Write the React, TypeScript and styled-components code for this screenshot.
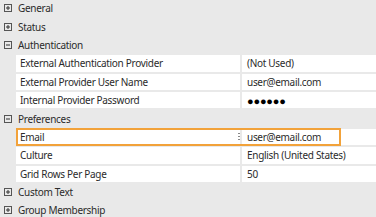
import React from "react";
import styled, { createGlobalStyle } from "styled-components";

const Global = createGlobalStyle`
  html, body { margin: 0; padding: 0; background: #e9e9e9; }
  body { font-family: "Noto Sans", "Open Sans", sans-serif; font-size: 10px; letter-spacing: -0.3px; color: #2b2b2b; overflow: hidden; }
`;

const Grid = styled.div`
  display: flex;
  flex-direction: column;
  width: 376px;
  margin-top: -1px;
`;

const GroupRow = styled.div`
  display: flex;
  align-items: center;
  height: 18.4px;
  padding-left: 4px;
  gap: 6px;
`;

const Toggle = styled.svg`
  width: 8px;
  height: 8px;
  flex: none;
`;

const Caption = styled.span`
  line-height: 1;
`;

const DataRow = styled.div`
  display: flex;
  height: 18.4px;
  padding: 1px 0 1px 16px;
  box-sizing: border-box;
  gap: 2px;
  position: relative;
`;

const Cell = styled.div<{ $w?: number }>`
  background: #fff;
  display: flex;
  align-items: center;
  padding-left: ${(p) => (p.$w ? 4 : 5)}px;
  box-sizing: border-box;
  ${(p) => (p.$w ? `width: ${p.$w}px; flex: none;` : "flex: 1;")}
  white-space: nowrap;
`;

const Dots = styled.div`
  position: absolute;
  left: 238px;
  top: 4px;
  width: 2px;
  height: 10px;
  background: radial-gradient(circle, #888 0.8px, transparent 1px) 0 0 / 2px 3px repeat-y;
`;

const Focus = styled.div`
  position: absolute;
  left: 16px;
  top: 0;
  width: 325px;
  height: 100%;
  border: 2px solid #f2a23a;
  box-sizing: border-box;
  pointer-events: none;
`;

const Password = styled.span`
  font-size: 11px;
  letter-spacing: -0.2px;
  color: #000;
`;

const Icon = ({ open }: { open: boolean }) => (
  <Toggle viewBox="0 0 8 8">
    <rect x="0.5" y="0.5" width="7" height="7" fill="none" stroke="#555" strokeWidth="1" />
    <line x1="2" y1="4" x2="6" y2="4" stroke="#333" strokeWidth="1" />
    {!open && <line x1="4" y1="2" x2="4" y2="6" stroke="#333" strokeWidth="1" />}
  </Toggle>
);

const Group = ({ label, open }: { label: string; open: boolean }) => (
  <GroupRow>
    <Icon open={open} />
    <Caption>{label}</Caption>
  </GroupRow>
);

const Row = ({ name, value, focus }: { name: string; value: React.ReactNode; focus?: boolean }) => (
  <DataRow>
    <Cell $w={224}>{name}</Cell>
    <Cell>{value}</Cell>
    {focus && (
      <>
        <Dots />
        <Focus />
      </>
    )}
  </DataRow>
);

export default function App() {
  return (
    <>
      <Global />
      <Grid>
        <Group label="General" open={false} />
        <Group label="Status" open={false} />
        <Group label="Authentication" open />
        <Row name="External Authentication Provider" value="(Not Used)" />
        <Row name="External Provider User Name" value="user@email.com" />
        <Row name="Internal Provider Password" value={<Password>●●●●●●</Password>} />
        <Group label="Preferences" open />
        <Row name="Email" value="user@email.com" focus />
        <Row name="Culture" value="English (United States)" />
        <Row name="Grid Rows Per Page" value="50" />
        <Group label="Custom Text" open={false} />
        <Group label="Group Membership" open={false} />
      </Grid>
    </>
  );
}
